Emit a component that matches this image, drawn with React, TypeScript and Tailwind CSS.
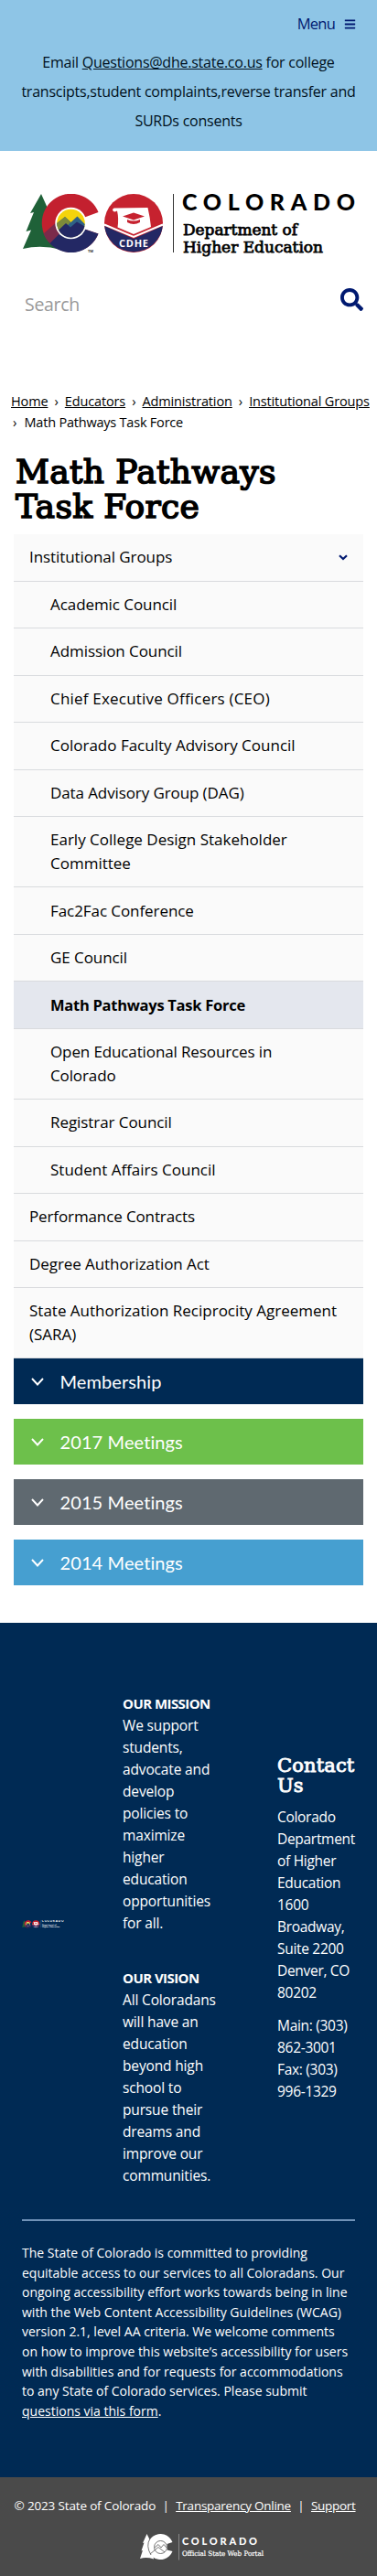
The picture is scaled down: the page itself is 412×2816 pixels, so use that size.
import { Fragment } from "react";
import { FaBars, FaSearch } from "react-icons/fa";

const OPEN = "font-['Open_Sans','Noto_Sans',sans-serif]";
const SLAB = "font-['DejaVu_Serif',serif]";

function TreeAndC() {
  return (
    <>
      <path d="M20 0 L29.500 21 L26 20.500 L36 40 L31 40 L42 61 Q20 55 0 60 L9 39.500 L3.500 41 L12 20 L8 21 Z" fill="#1f6138" />
      <path d="M82.500 20 A32 32 0 1 0 82.500 43.500 L67.500 38.500 A16 16 0 1 1 67.500 25.500 Z" fill="#c3202f" />
      <path d="M82.500 43.500 L67.500 38.500 A16 16 0 0 1 40 42 L28 52.500 A32 32 0 0 0 82.500 43.500 Z" fill="#232864" />
      <path d="M22.500 43.500 L36.500 31 A16 16 0 0 0 40.500 43 L29.500 54 A32 32 0 0 1 22.500 43.500 Z" fill="#7a2b4b" />
      <circle cx="52.500" cy="32" r="17.200" fill="#fff" />
      <circle cx="52.500" cy="32" r="15.300" fill="#f5d40b" />
      <path d="M37.200 32 L46 25 L52.500 31 L59.500 24.500 L67.700 33 A15.300 15.300 0 0 1 37.200 32 Z" fill="#2f6286" />
      <path d="M37.200 32 L46 25 L52 31 L42 42.500 A15.300 15.300 0 0 1 37.200 32 Z" fill="#7d8a3a" />
      <path d="M39 39.500 L47 32 L52 36.500 L59 30.500 L67.500 35.500 A15.300 15.300 0 0 1 39 39.500 Z" fill="#232864" />
    </>
  );
}

function Seal() {
  return (
    <>
      <circle cx="121" cy="32" r="32" fill="#c6222f" />
      <path d="M89.200 35 L121 49 L152.800 35 A32 32 0 0 1 89.200 35 Z" fill="#232864" />
      <path d="M89 33.500 L121 47 L153 33.500" fill="none" stroke="#fff" strokeWidth="2" />
      <path d="M100.500 15.500 L136.500 15 Q139 26 140 36 L121 44 L103.500 36.500 Q105 27 103 18.500 Q99 21 98 17.500 Q98.500 15 100.500 15.500 Z" fill="#fff" />
      <path d="M109 24.500 L121 20.500 L133 24.500 L121 28.500 Z" fill="#c6222f" />
      <path d="M114 28 Q121 31 128 28 V31 Q121 35 114 31 Z" fill="#c6222f" />
      <text x="105" y="58" textLength="32" className="font-['Open_Sans'] text-[11px] font-bold" fill="#fff">CDHE</text>
    </>
  );
}

function HeaderLogo() {
  return (
    <svg width="370" height="70" viewBox="0 0 370 70" className="block">
      <TreeAndC />
      <text x="71" y="63.500" className="font-['Open_Sans'] text-[4px] font-bold" fill="#333">TM</text>
      <Seal />
      <path d="M164.500 0 V64" stroke="#333" strokeWidth="1" />
      <text x="174" y="18" textLength="189" className="font-['Lato'] text-[25px] font-black" fill="#000">COLORADO</text>
      <text x="175" y="45" textLength="125" lengthAdjust="spacingAndGlyphs" className="font-['DejaVu_Serif'] text-[16px]" fill="#000" stroke="#000" strokeWidth=".75">Department of</text>
      <text x="175" y="64" textLength="153" lengthAdjust="spacingAndGlyphs" className="font-['DejaVu_Serif'] text-[16px]" fill="#000" stroke="#000" strokeWidth=".75">Higher Education</text>
    </svg>
  );
}

function MiniLogo() {
  return (
    <svg width="46" height="9" viewBox="0 0 366 68" className="block">
      <TreeAndC />
      <Seal />
      <path d="M164.500 0 V64" stroke="#8fa3ba" strokeWidth="2" />
      <text x="174" y="18" textLength="188" className="font-['Lato'] text-[25px] font-black" fill="#fff">COLORADO</text>
      <text x="175" y="44" textLength="125" lengthAdjust="spacingAndGlyphs" className="font-['DejaVu_Serif'] text-[16px] font-bold" fill="#fff">Department of</text>
      <text x="175" y="64" textLength="153" lengthAdjust="spacingAndGlyphs" className="font-['DejaVu_Serif'] text-[16px] font-bold" fill="#fff">Higher Education</text>
    </svg>
  );
}

function PortalLogo() {
  return (
    <svg width="138" height="29" viewBox="0 0 138 29" className="block">
      <path d="M7.500 0 L11 7 L10 7 L13 14 L15 27.500 Q7 25 0 27 L3 18 L1.500 18.500 L4.500 9.500 L3 10 Z" fill="#fff" />
      <path d="M35.500 9 A14 14 0 1 0 35.500 19 L29.500 17.500 L29.500 11 Z" fill="#fff" />
      <circle cx="22.500" cy="14.500" r="7.500" fill="#fff" />
      <circle cx="22.500" cy="14.500" r="7" fill="none" stroke="#555" strokeWidth=".8" />
      <path d="M16 15 L20 11.500 L23 15 L26 11.500 L29 15 M11 22 L20 14.500 L27 20 M11 5 Q6 13 12 23" fill="none" stroke="#555" strokeWidth=".8" />
      <path d="M42.500 0 V28.500" stroke="#888" strokeWidth="1" />
      <text x="46" y="11.700" textLength="82" className="font-['Lato'] text-[11px] font-black" fill="#fff">COLORADO</text>
      <text x="46" y="24" textLength="89" lengthAdjust="spacingAndGlyphs" className="font-['DejaVu_Serif'] text-[7.500px]" fill="#fff" stroke="#fff" strokeWidth=".2">Official State Web Portal</text>
    </svg>
  );
}

const crumbs = ["Home", "Educators", "Administration", "Institutional Groups"];

type NavItem = { lines: string[]; sub?: boolean; active?: boolean; open?: boolean; tracking?: string };
const nav: NavItem[] = [
  { lines: ["Institutional Groups"], open: true },
  { lines: ["Academic Council"], sub: true },
  { lines: ["Admission Council"], sub: true },
  { lines: ["Chief Executive Officers (CEO)"], sub: true, tracking: "tracking-[0.2px]" },
  { lines: ["Colorado Faculty Advisory Council"], sub: true, tracking: "tracking-[0px]" },
  { lines: ["Data Advisory Group (DAG)"], sub: true, tracking: "tracking-[-0.1px]" },
  { lines: ["Early College Design Stakeholder", "Committee"], sub: true, tracking: "tracking-[0px]" },
  { lines: ["Fac2Fac Conference"], sub: true },
  { lines: ["GE Council"], sub: true },
  { lines: ["Math Pathways Task Force"], sub: true, active: true },
  { lines: ["Open Educational Resources in", "Colorado"], sub: true, tracking: "tracking-[-0.12px]" },
  { lines: ["Registrar Council"], sub: true },
  { lines: ["Student Affairs Council"], sub: true, tracking: "tracking-[0px]" },
  { lines: ["Performance Contracts"], tracking: "tracking-[-0.12px]" },
  { lines: ["Degree Authorization Act"] },
  { lines: ["State Authorization Reciprocity Agreement", "(SARA)"], tracking: "tracking-[0px]" },
];

const panels = [
  { title: "Membership", bg: "bg-[#002a54]" },
  { title: "2017 Meetings", bg: "bg-[#6dc04b]" },
  { title: "2015 Meetings", bg: "bg-[#5f6970]" },
  { title: "2014 Meetings", bg: "bg-[#469fd0]" },
];

const mission = ["We support", "students,", "advocate and", "develop", "policies to", "maximize", "higher", "education", "opportunities", "for all."];
const vision = ["All Coloradans", "will have an", "education", "beyond high", "school to", "pursue their", "dreams and", "improve our", "communities."];
const address = ["Colorado", "Department", "of Higher", "Education", "1600", "Broadway,", "Suite 2200", "Denver, CO", "80202"];
const phones = ["Main: (303)", "862-3001", "Fax: (303)", "996-1329"];
const statement = [
  "The State of Colorado is committed to providing",
  "equitable access to our services to all Coloradans. Our",
  "ongoing accessibility effort works towards being in line",
  "with the Web Content Accessibility Guidelines (WCAG)",
  "version 2.1, level AA criteria. We welcome comments",
  "on how to improve this website’s accessibility for users",
  "with disabilities and for requests for accommodations",
  "to any State of Colorado services. Please submit",
];

function Lines({ items }: { items: string[] }) {
  return (
    <>
      {items.map((line) => (
        <span key={line} className="block">{line}</span>
      ))}
    </>
  );
}

export default function App() {
  return (
    <div className={`${OPEN} w-[412px] overflow-hidden whitespace-nowrap bg-white text-black`}>
      <header>
        <div className="h-[165px] bg-[#8ec5e6]">
          <div className="flex h-[52px] items-center justify-end gap-[10px] pr-[23px] text-[#001970]">
            <span className="text-[16.5px] tracking-[-0.75px]">Menu</span>
            <FaBars className="size-[13px]" />
          </div>
          <p className="text-center text-base leading-8 tracking-[-0.24px] text-[#001020]">
            <span className="block">Email <a className="underline">Questions@dhe.state.co.us</a> for college</span>
            <span className="block">transcipts,student complaints,reverse transfer and</span>
            <span className="block">SURDs consents</span>
          </p>
        </div>
        <div className="pl-[25px] pt-[47px]"><HeaderLogo /></div>
        <div className="flex h-[140px] items-start justify-between pl-[27px] pr-[15px] pt-[33px]">
          <span className="pt-1 text-[19.5px] leading-7 tracking-[-0.3px] text-[#999]">Search</span>
          <FaSearch className="size-[25px] text-[#001970]" />
        </div>
      </header>

      <nav className="h-[74px] pl-3 pt-[5px] text-[14.5px] leading-[23px] tracking-[-0.140px]">
        <div className="flex">
          {crumbs.map((crumb, i) => (
            <Fragment key={crumb}>
              {i > 0 && <span className="w-[18.400px] text-center">›</span>}
              <a className="underline">{crumb}</a>
            </Fragment>
          ))}
        </div>
        <div className="flex"><span className="w-[14.500px] pl-[2px]">›</span><span className="tracking-[-0.210px]">Math Pathways Task Force</span></div>
      </nav>

      <main className="h-[1278px] px-[15px]">
        <h1 className={`${SLAB} h-[88px] pl-[2px] pt-px text-[36px] font-normal leading-[38px] tracking-[0.350px] [-webkit-text-stroke:1.6px_black]`}>
          <span className="block">Math Pathways</span>
          <span className="block">Task Force</span>
        </h1>
        <ul className="h-[901px] text-[17px] leading-[25.75px] tracking-[-0.07px]">
          {nav.map((item, i) => (
            <li
              key={i}
              className={`flex items-center justify-between border-b border-[#d9dbde] pr-[17px] ${item.lines.length > 1 ? "h-[77.250px]" : "h-[51.500px]"} ${item.sub ? "pl-10" : "pl-[17px]"} ${item.active ? "bg-[#e4e7ee] text-[16.500px] font-bold tracking-[-0.270px]" : "bg-[#fafafa]"} ${item.tracking ?? ""}`}
            >
              <div><Lines items={item.lines} /></div>
              {item.open && (
                <svg width="10" height="7" viewBox="0 0 10 7"><path d="M1 1.200 L5 5 L9 1.200" fill="none" stroke="#001970" strokeWidth="2.200" /></svg>
              )}
            </li>
          ))}
        </ul>
        <div className="flex flex-col gap-4">
          {panels.map((panel) => (
            <div key={panel.title} className={`flex h-[50px] items-center pl-[19px] text-white ${panel.bg}`}>
              <svg width="14" height="9" viewBox="0 0 14 9"><path d="M1 1 L7 7.500 L13 1" fill="none" stroke="currentColor" strokeWidth="1.900" /></svg>
              <span className="pl-[17.500px] font-['Lato'] text-[20px] leading-[28px] tracking-[0.100px]">{panel.title}</span>
            </div>
          ))}
        </div>
      </main>

      <footer>
        <div className="h-[934px] bg-[#002a54] px-6 text-white">
          <div className="grid h-[652px] grid-cols-[110px_169px_85px] text-[15.500px] leading-6 tracking-[-0.150px]">
            <div className="pt-[325px]"><MiniLogo /></div>
            <div className="pt-[76px]">
              <div className="h-[300px]">
                <strong className="block text-[15px] tracking-[-0.550px]">OUR MISSION</strong>
                <Lines items={mission} />
              </div>
              <strong className="block text-[15px] tracking-[-0.550px]">OUR VISION</strong>
              <Lines items={vision} />
            </div>
            <div className="pt-[145px] tracking-[-0.300px]">
              <h2 className={`${SLAB} h-[55px] text-[21px] font-normal leading-[22px] tracking-[0.150px] [-webkit-text-stroke:0.9px_white]`}>
                <span className="block">Contact</span>
                <span className="block">Us</span>
              </h2>
              <p className="mb-3"><Lines items={address} /></p>
              <p><Lines items={phones} /></p>
            </div>
          </div>
          <hr className="border-t-2 border-[#7193b8]" />
          <p className="pt-[24px] text-[14px] leading-[21.600px]">
            <Lines items={statement} />
            <span className="block"><a className="underline">questions via this form</a>.</span>
          </p>
        </div>
        <div className="h-[108px] bg-[#4a4a4a] text-white">
          <div className="flex gap-[7.400px] pl-[15.500px] pt-[19px] text-[13.500px] leading-6 tracking-[-0.160px]">
            <span>© 2023 State of Colorado</span>
            <span>|</span>
            <a className="tracking-[-0.250px] underline">Transparency Online</a>
            <span>|</span>
            <a className="tracking-[-0.300px] underline">Support</a>
          </div>
          <div className="pl-[153px] pt-[19px]"><PortalLogo /></div>
        </div>
      </footer>
    </div>
  );
}
